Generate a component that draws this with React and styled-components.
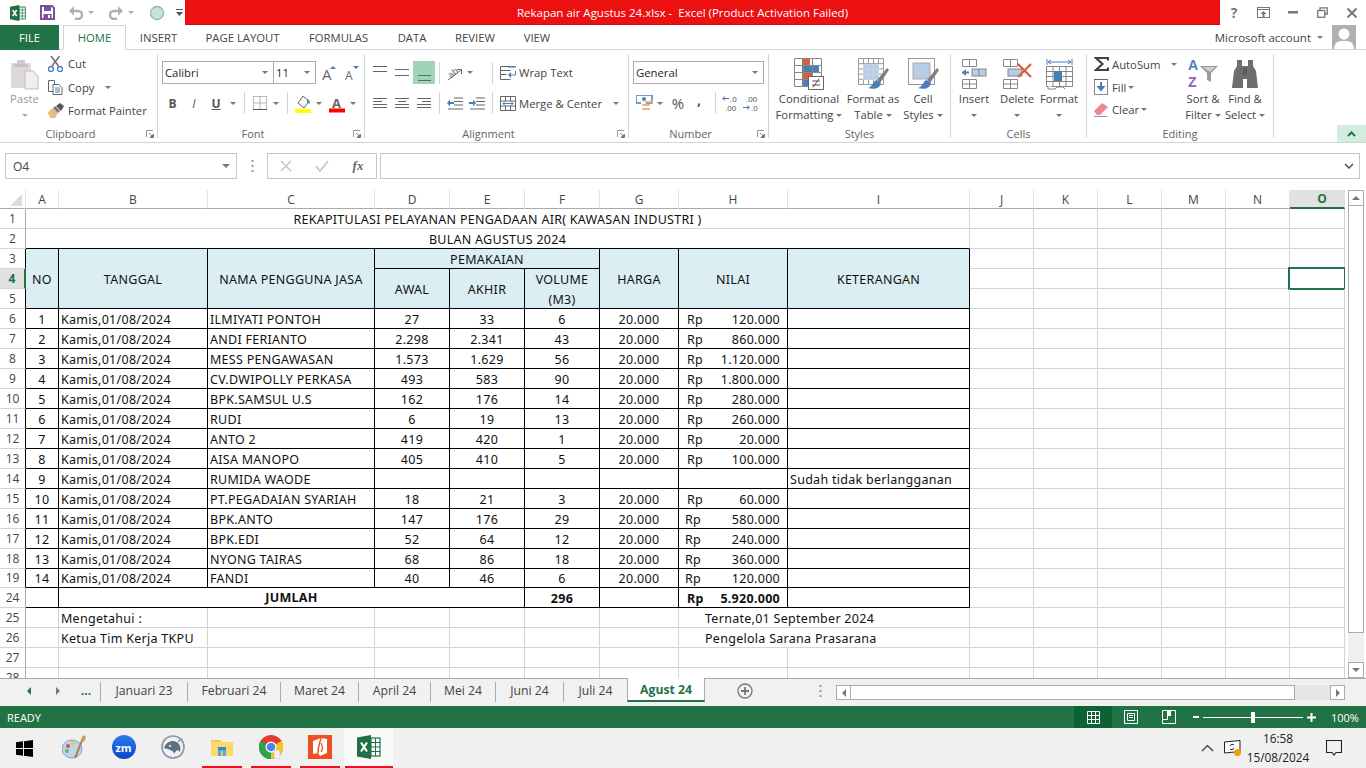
import React from 'react';
import styled, { createGlobalStyle } from 'styled-components';

const UI = '"Open Sans", "Noto Sans", sans-serif';
const CELL = '"Noto Sans", "Open Sans", sans-serif';
const ICON_TEXT = '"Liberation Sans", sans-serif';
const GREEN = '#217346';

const Global = createGlobalStyle`
  html, body { margin: 0; padding: 0; background: #fff; overflow: hidden; }
  #root { width: 1366px; height: 768px; }
  * { box-sizing: border-box; }
`;

const Screen = styled.div`
  width: 1366px; height: 768px; display: flex; flex-direction: column;
  font-family: ${UI}; font-size: 11px; color: #444; background: #fff; overflow: hidden;
`;

/* ---------- title bar ---------- */
const TitleBar = styled.div`display: flex; height: 25px; background: #fff; align-items: stretch;`;
const Qat = styled.div`width: 185px; display: flex; align-items: center; flex: none;`;
const QatItem = styled.span`
  width: ${p => p.$w}px; margin-left: ${p => p.$ml || 0}px; display: flex; justify-content: center; align-items: center;
`;
const RedTitle = styled.div`
  flex: 1; background: #ec1010; border-bottom: 1px solid #c40d0d; color: #fff; font-size: 11.5px; padding-right: 40px;
  display: flex; align-items: center; justify-content: center; white-space: pre;
`;
const WinControls = styled.div`width: 146px; display: flex; align-items: center; flex: none;`;
const HelpMark = styled.span`font-weight: 700; font-size: 14px; color: #777; width: 28px; text-align: center;`;

/* ---------- menu tabs ---------- */
const MenuRow = styled.div`display: flex; height: 25px; align-items: stretch; border-bottom: 1px solid #d4d4d4; flex: none;`;
const FileTab = styled.div`
  width: 59px; height: 25px; background: ${GREEN}; color: #fff; display: flex; align-items: center; justify-content: center;
  font-size: 11.3px; margin-right: 4px;
`;
const MenuTab = styled.div`
  width: ${p => p.$w}px; height: 25px; display: flex; align-items: center; justify-content: center; flex: none;
  font-size: 11.3px; color: ${p => (p.$active ? GREEN : '#444')};
  ${p => p.$active && `border: 1px solid #d4d4d4; border-bottom: 1px solid #fff; background:#fff;`}
`;
const Account = styled.div`
  margin-left: auto; display: flex; align-items: center; font-size: 11.5px; color: #444; padding-right: 10px; height: 24px;
`;
const Avatar = styled.div`width: 24px; height: 24px; margin-left: 8px; background: #b1b1b1; overflow: hidden; display: flex;`;

/* ---------- ribbon ---------- */
const Ribbon = styled.div`
  display: flex; height: 93px; border-bottom: 1px solid #d4d4d4; padding-top: 4px; position: relative; flex: none;
`;
const Group = styled.div`
  width: ${p => p.$w}px; height: 84px; border-right: 1px solid #d4d4d4; display: flex; flex-direction: column; position: relative; flex: none;
`;
const GroupBody = styled.div`
  height: 72px; display: flex; padding-left: ${p => p.$pl || 0}px; align-items: flex-start;
`;
const GroupLabel = styled.div`
  height: 16px; line-height: 16px; margin-bottom: -4px; text-align: center; font-size: 11px; color: #666;
  padding-right: ${p => p.$pr || 0}px;
`;
const Launcher = styled.span`position: absolute; right: 3px; bottom: 0; width: 8px; height: 8px; display: flex;`;
const Stack = styled.div`display: flex; flex-direction: column; width: ${p => (p.$w ? p.$w + 'px' : 'auto')}; flex: none;`;
const ToolRow = styled.div`display: flex; align-items: center; height: ${p => p.$h}px; margin-top: ${p => p.$mt || 0}px; flex: none;`;
const Tool = styled.span`
  width: ${p => p.$w}px; height: ${p => p.$h || 20}px; margin-left: ${p => p.$ml || 0}px; display: flex; align-items: center; justify-content: center;
  flex: none; background: ${p => (p.$active ? '#9fd5b7' : 'transparent')};
`;
const Sep = styled.span`width: 1px; height: 22px; background: #d4d4d4; margin-left: ${p => p.$ml || 0}px; flex: none;`;
const ToolText = styled.span`
  margin-left: ${p => p.$ml || 0}px; width: ${p => (p.$w ? p.$w + 'px' : 'auto')}; font-size: 11.3px; color: #444; white-space: nowrap; flex: none;
`;
const Caret = styled.i`
  display: block; width: 0; height: 0; border-left: 3px solid transparent; border-right: 3px solid transparent;
  border-top: 3px solid ${p => p.$c || '#777'};
`;
const CaretBox = styled.span`
  width: ${p => p.$w}px; margin-left: ${p => p.$ml || 0}px; display: flex; justify-content: center; align-items: center; flex: none; height: 16px;
`;
const Select = styled.div`
  width: ${p => p.$w}px; height: 23px; margin-left: ${p => p.$ml || 0}px; border: 1px solid #ababab; display: flex; align-items: center; flex: none;
  padding: 0 5px 0 2px; justify-content: space-between; font-size: 11.3px; color: #262626; background: #fff;
`;
const Paste = styled.div`
  width: 41px; margin-left: 4px; display: flex; flex-direction: column; align-items: center; color: #9a9a9a; font-size: 11.3px; flex: none;
`;
const PasteLabel = styled.span`line-height: 16px; height: 17px; margin-bottom: 6px;`;
const Big = styled.div`
  width: ${p => p.$w}px; display: flex; flex-direction: column; align-items: center; flex: none; font-size: 11.3px; color: #444;
`;
const BigIcon = styled.div`height: 32px; margin-top: 4px; margin-bottom: 1px; display: flex; align-items: center; justify-content: center;`;
const BigLine = styled.div`
  height: 16px; line-height: 16px; white-space: nowrap; display: flex; align-items: center; gap: 3px;
`;
const Collapse = styled.div`
  position: absolute; right: 0; bottom: 0; width: 29px; height: 17px; background: #d3ecdd; display: flex; align-items: center; justify-content: center;
`;
const SymbolText = styled.span`
  font-family: ${UI}; color: #555; font-size: ${p => p.$s}px; font-weight: ${p => (p.$b ? 700 : 400)};
  margin-top: ${p => p.$mt || 0}px;
`;

/* ---------- formula bar ---------- */
const FormulaBar = styled.div`height: 47px; display: flex; padding: 10px 6px 0 5px; flex: none; background: #fff;`;
const NameBox = styled.div`
  width: 232px; height: 26px; border: 1px solid #c6c6c6; display: flex; align-items: center; justify-content: space-between; padding: 0 6px 0 7px;
  font-size: 12px; color: #444; flex: none;
`;
const Dots = styled.span`width: 30px; height: 26px; display: flex; justify-content: center; align-items: center; flex: none;`;
const FxBox = styled.div`
  width: 110px; height: 26px; border: 1px solid #c6c6c6; display: flex; align-items: center; flex: none;
`;
const FxMark = styled.span`
  font-family: "Liberation Serif", serif; font-style: italic; font-weight: 700; font-size: 13px; color: #666;
`;
const FormulaInput = styled.div`
  flex: 1; margin-left: 3px; height: 26px; border: 1px solid #c6c6c6; display: flex; align-items: center; justify-content: flex-end; padding-right: 5px;
`;

/* ---------- sheet ---------- */
const SheetArea = styled.div`display: flex; height: 488px; flex: none; background: #fff;`;
const SheetClip = styled.div`width: 1345px; height: 488px; overflow: hidden; flex: none;`;
const Table = styled.table`
  table-layout: fixed; width: 1345px; border-collapse: separate; border-spacing: 0; font-family: ${CELL}; font-size: 12.5px; letter-spacing: .28px; color: #111;
`;
const Col = styled.col`width: ${p => p.$w}px;`;
const Row = styled.tr`height: ${p => p.$h || 20}px;`;
const ColHead = styled.th`
  padding: 1px 0 0 ${p => (p.$sel ? 10 : 0)}px; font-weight: ${p => (p.$sel ? 700 : 400)}; font-size: 12px; letter-spacing: 0; color: ${p => (p.$sel ? GREEN : '#444')};
  background: ${p => (p.$sel ? '#e1e1e1' : '#fff')};
  border-right: 1px solid ${p => (p.$sel ? '#e1e1e1' : '#e4e4e4')}; border-bottom: ${p => (p.$sel ? `2px solid ${GREEN}` : '1px solid #ababab')};
  font-family: ${UI}; line-height: 16px;
`;
const Corner = styled.th`
  padding: 0 0 0 9px; border-right: 1px solid #e4e4e4; border-bottom: 1px solid #ababab; background: #fff;
`;
const RowHead = styled.th`
  padding: 0; font-weight: ${p => (p.$sel ? 700 : 400)}; font-size: 12px; letter-spacing: 0; font-family: ${UI};
  color: ${p => (p.$sel ? GREEN : '#444')}; background: ${p => (p.$sel ? '#e1e1e1' : '#fff')};
  border-right: ${p => (p.$sel ? `2px solid ${GREEN}` : `1px solid ${p.$dark ? '#000' : '#ababab'}`)};
  border-bottom: 1px solid #d4d4d4; line-height: 16px;
`;
const Cell = styled.td`
  padding: ${p => (p.$raise ? '0 2px' : '2px 2px 0')}; line-height: 16px; white-space: nowrap; position: relative; vertical-align: middle;
  text-align: ${p => p.$al || 'left'};
  background: ${p => (p.$head ? '#daeef3' : 'transparent')};
  font-weight: ${p => (p.$b ? 700 : 400)};
  padding-left: ${p => p.$pl ?? 2}px;
  border-right: ${p => (p.$nr ? 'none' : `1px solid ${p.$r === 'k' ? '#000' : '#d4d4d4'}`)};
  border-bottom: ${p => (p.$nb ? 'none' : `1px solid ${p.$d === 'k' ? '#000' : '#d4d4d4'}`)};
`;
const Selection = styled.span`
  position: absolute; left: -2px; top: -2px; right: -2px; bottom: -2px; border: 2px solid ${GREEN}; pointer-events: none;
`;
const Money = styled.span`display: flex; justify-content: space-between; padding-left: ${p => p.$pl}px; padding-right: 5px; font-weight: inherit;`;

const VScroll = styled.div`
  width: 16px; margin-left: 3px; height: 488px; display: flex; flex-direction: column; background: #f0f0f0; flex: none;
`;
const ScrollBtn = styled.div`
  height: ${p => p.$h || 16}px; width: ${p => p.$w || 16}px; border: 1px solid #ababab; background: #fff; display: flex; align-items: center; justify-content: center; flex: none;
`;
const VThumb = styled.div`height: 427px; border: 1px solid #ababab; border-top: none; background: #fff; flex: none;`;
const VTrack = styled.div`flex: 1;`;

/* ---------- sheet tabs ---------- */
const TabBar = styled.div`
  height: 28px; border-top: 1px solid #ababab; background: #f1f1f1; display: flex; flex: none; padding-bottom: 4px; position: relative;
`;
const Nav = styled.div`width: 100px; display: flex; align-items: center; flex: none; height: 23px;`;
const NavItem = styled.span`
  width: ${p => p.$w}px; margin-left: ${p => p.$ml || 0}px; display: flex; justify-content: center; align-items: center; color: ${GREEN}; font-weight: 700; font-size: 12px;
`;
const TabSep = styled.span`width: 1px; height: 20px; background: #ababab; margin-top: 3px; flex: none;`;
const SheetTab = styled.div`
  width: ${p => p.$w}px; height: 23px; display: flex; align-items: center; justify-content: center; flex: none; font-size: 12.2px; color: #444;
  ${p => p.$active && `margin-top:-1px; height: 24px; background:#fff; color:${GREEN}; font-weight:700; border-left:1px solid #ababab; border-right:1px solid #ababab; border-bottom:2px solid ${GREEN};`}
`;
const AddArea = styled.div`width: 80px; display: flex; align-items: center; justify-content: center; height: 23px; flex: none;`;
const TabDots = styled.div`width: 51px; padding-left: 19px; display: flex; align-items: center; justify-content: center; height: 23px; flex: none;`;
const HScroll = styled.div`
  width: 509px; height: 15px; margin-top: 6px; display: flex; background: #e6e6e6; flex: none;
`;
const HThumb = styled.div`width: 444px; height: 15px; border: 1px solid #ababab; border-left: none; background: #fff; flex: none;`;
const HTrack = styled.div`flex: 1;`;

/* ---------- status bar ---------- */
const StatusBar = styled.div`
  height: 22px; background: ${GREEN}; color: #fff; display: flex; align-items: center; font-size: 11px; flex: none; padding-left: 7px;
`;
const ViewBtn = styled.div`
  width: ${p => p.$w}px; height: 22px; display: flex; align-items: center; justify-content: center; flex: none;
  background: ${p => (p.$active ? '#0b6234' : 'transparent')}; margin-left: ${p => p.$ml || 0}px;
`;
const ZoomTrack = styled.div`
  width: 100px; height: 1px; background: #fff; position: relative; margin: 0 3px 0 4px; flex: none;
`;
const ZoomThumb = styled.span`position: absolute; left: 48px; top: -5px; width: 4px; height: 11px; background: #fff;`;
const ZoomPct = styled.span`margin-left: 15px; color: #fff; font-size: 11px;`;

/* ---------- taskbar ---------- */
const Taskbar = styled.div`height: 40px; background: #f0f0f0; display: flex; flex: none;`;
const StartBtn = styled.div`width: 50px; display: flex; justify-content: center; padding-right: 2px; align-items: center; flex: none;`;
const TaskItem = styled.div`
  width: ${p => p.$w || 49}px; display: flex; flex-direction: column; align-items: center; flex: none;
  background: ${p => (p.$active ? '#f9f9f9' : 'transparent')};
`;
const TaskIcon = styled.div`flex: 1; display: flex; align-items: center; justify-content: center;`;
const TaskLine = styled.div`height: 2px; width: ${p => p.$w}px; background: ${p => (p.$on ? '#e81123' : 'transparent')}; flex: none;`;
const Tray = styled.div`margin-left: auto; display: flex; align-items: center; flex: none;`;
const TrayIcon = styled.span`width: 18px; margin-left: 10px; flex: none;`;
const Clock = styled.div`
  width: 72px; text-align: center; font-size: 11.8px; color: #222; line-height: 19px; display: flex; flex-direction: column;
`;
const Notice = styled.div`width: 52px; padding-right: 13px; display: flex; justify-content: center;`;

/* ---------- icons ---------- */
const Ic = ({ w, h = w, children }) => <svg width={w} height={h} viewBox={`0 0 ${w} ${h}`} style={{ display: 'block', flex: 'none' }}>{children}</svg>;

const ExcelLogo = ({ s = 16 }) => (
  <svg width={s} height={s} viewBox="0 0 24 24" style={{ display: 'block' }}>
    <rect x="9" y="3" width="14" height="18" fill="#fff" stroke="#1e7145" strokeWidth="1.2" />
    <path d="M14 3v18M18.500 3v18M9 7.500h14M9 12h14M9 16.500h14" stroke="#1e7145" strokeWidth="1" />
    <path d="M0 2.500 14 0v24L0 21.500z" fill="#1e7145" />
    <path d="M4 7.500 10 16.500M10 7.500 4 16.500" stroke="#fff" strokeWidth="2.200" />
  </svg>
);
const SaveIc = () => (
  <Ic w={15}>
    <path d="M1 1h11l2 2v11H1z" fill="#fff" stroke="#7c4fa3" strokeWidth="2" />
    <rect x="4" y="1" width="7" height="5" fill="#7c4fa3" />
    <rect x="3.500" y="9" width="8" height="5" fill="#7c4fa3" /><rect x="8" y="10" width="2" height="3" fill="#fff" />
  </Ic>
);
const UndoIc = ({ flip }) => (
  <svg width="16" height="14" viewBox="0 0 16 14" style={{ display: 'block', transform: flip ? 'scaleX(-1)' : 'none' }}>
    <path d="M2 5h8c3 0 4 2 4 4s-1.500 4-4 4H7" fill="none" stroke="#b0b0b0" strokeWidth="2.400" />
    <path d="M6 0 1 5l5 4.500z" fill="#b0b0b0" />
  </svg>
);
const QatCircle = () => (
  <Ic w={16}><circle cx="8" cy="8" r="6.500" fill="#c9e2d6" stroke="#8fb8a6" strokeWidth="1.300" /></Ic>
);
const QatMenu = () => (
  <Ic w={7} h={9}><path d="M0 1.500h7" stroke="#555" strokeWidth="1" /><path d="M0 4h7L3.500 8z" fill="#555" /></Ic>
);
const RibDisp = () => (
  <Ic w={13} h={11}><rect x=".5" y=".5" width="12" height="10" fill="none" stroke="#777" /><path d="M0 2.500h13" stroke="#777" /><path d="M3.500 7 6.500 4l3 3H7.500v3h-2V7z" fill="#777" /></Ic>
);
const MinIc = () => <Ic w={10} h={3}><rect width="10" height="2.500" fill="#777" /></Ic>;
const RestoreIc = () => (
  <Ic w={11}><path d="M3 3V.8h7.200V7H8" fill="none" stroke="#777" strokeWidth="1.300" /><rect x=".7" y="3.500" width="7" height="6.800" fill="none" stroke="#777" strokeWidth="1.300" /></Ic>
);
const CloseIc = () => <Ic w={10}><path d="M.5.500l9 9M9.500.5l-9 9" stroke="#777" strokeWidth="2" /></Ic>;
const AvatarIc = () => (
  <svg width="24" height="24" viewBox="0 0 24 24"><circle cx="12" cy="9" r="5.500" fill="#fff" /><path d="M2 24c0-6 4-8 7-8h6c3 0 7 2 7 8z" fill="#fff" /></svg>
);

const PasteIc = () => (
  <Ic w={29} h={31}>
    <rect x="1" y="4" width="20" height="25" rx="1" fill="#dcd8dc" />
    <rect x="7" y="1" width="8" height="6" rx="1" fill="#cfc9cf" /><rect x="4" y="5" width="14" height="3" fill="#c6c0c6" />
    <path d="M15 12h8l5 5v13H15z" fill="#f1eef1" stroke="#bdbdbd" />
  </Ic>
);
const CutIc = () => (
  <Ic w={15} h={16}>
    <path d="M3 0 10.500 10M11.500 0 4 10" stroke="#6e6e6e" strokeWidth="1.500" fill="none" />
    <circle cx="3" cy="13" r="2.500" fill="none" stroke="#4a7ebb" strokeWidth="1.300" /><circle cx="12" cy="13" r="2.500" fill="none" stroke="#4a7ebb" strokeWidth="1.300" />
  </Ic>
);
const CopyIc = () => (
  <Ic w={15}>
    <path d="M.5.500h6v11h-6z" fill="#fff" stroke="#666" />
    <path d="M5 4.500h6l3 3v7H5z" fill="#fff" stroke="#666" /><path d="M7 8h5M7 10h5M7 12h5" stroke="#4a7ebb" />
  </Ic>
);
const PainterIc = () => (
  <Ic w={17} h={15}>
    <path d="M.5 9.500 6 5l5 5-3 5H3.500z" fill="#e6bc85" /><path d="M6 5l2-2 5 5-2 2z" fill="#777" /><path d="M9 3l4-3 4 3-3 5z" fill="#555" />
  </Ic>
);
const Launch = () => (
  <Ic w={8}><path d="M.5 7V.5H7" fill="none" stroke="#999" /><path d="M3 3l4 4M7.500 4v3.500H4z" stroke="#777" fill="#777" /></Ic>
);
const Lines = ({ rows, w = 15 }) => (
  <Ic w={w} h={20}>{rows.map(([a, b, y], i) => <path key={i} d={`M${a} ${y + .5}H${b}`} stroke="#666" />)}</Ic>
);
const GrowA = ({ down }) => (
  <Ic w={14} h={20}>
    <text x="0" y="17" fontFamily={UI} fontSize={down ? 12 : 15} fill="#666">A</text>
    <path d={down ? 'M8 3h6l-3 3z' : 'M8 6h6l-3-3z'} fill="#4a7ebb" />
  </Ic>
);
const BoldT = styled.span`
  font-family: ${UI}; font-size: 12px; color: #555; font-weight: ${p => (p.$b ? 700 : 400)}; font-style: ${p => (p.$i ? 'italic' : 'normal')};
  text-decoration: ${p => (p.$u ? 'underline' : 'none')};
`;
const BorderIc = () => (
  <Ic w={14}>
    <path d="M.5.500h13v13H.5zM7 .5v13M.5 7h13" fill="none" stroke="#777" strokeDasharray="1 1" /><path d="M0 13.500h14" stroke="#555" />
  </Ic>
);
const FillIc = () => (
  <Ic w={16} h={19}>
    <path d="M3 9 8 2l6 5-5 7z" fill="#fff" stroke="#666" /><path d="M12 5c3 1 3 4 2.500 5L12 8z" fill="#4a7ebb" />
    <rect y="15" width="16" height="4" fill="#ffff00" />
  </Ic>
);
const FontColorIc = () => (
  <Ic w={16} h={20}>
    <text x="3" y="15" fontFamily={UI} fontWeight="700" fontSize="13" fill="#666">A</text>
    <rect y="15.500" width="16" height="4" fill="#ff0000" />
  </Ic>
);
const OrientIc = () => (
  <svg width="22" height="22" viewBox="0 0 22 22" style={{ display: 'block', flex: 'none', margin: '-1px -2px' }}>
    <text x="4" y="14" fontFamily={ICON_TEXT} fontSize="9" fill="#666" transform="rotate(-40 9 11)">ab</text>
    <path d="M4 18 17 8" stroke="#666" /><path d="M13 7.500h4.500V12" fill="none" stroke="#666" />
  </svg>
);
const IndentIc = ({ right }) => (
  <Ic w={16} h={13}>
    <path d="M7 1h9M7 4.500h9M7 8h9M1 12h15" stroke="#666" fill="none" />
    {right ? <path d="M0 5h4V2.500L7 6 4 9.500V7H0z" fill="#4a7ebb" /> : <path d="M7 5H3V2.500L0 6l3 3.500V7h4z" fill="#4a7ebb" />}
  </Ic>
);
const WrapIc = () => (
  <Ic w={16} h={14}>
    <path d="M.5.500h15M.5 4.500h10M.5 8.500h6M.5 13.500h10M.5.500v13" stroke="#666" fill="none" />
    <path d="M8 1h8" stroke="#4a7ebb" /><path d="M15.500 5v4H9" stroke="#4a7ebb" fill="none" /><path d="M11 6 8 9l3 3z" fill="#4a7ebb" />
  </Ic>
);
const MergeIc = () => (
  <Ic w={16} h={15}>
    <path d="M.5.500h15v14H.5zM.5 5h15M.5 10h15M5.500.5V5M10.500.5V5M5.500 10v4.500M10.500 10v4.500" fill="none" stroke="#666" />
    <path d="M3 7.500h10" stroke="#4a7ebb" /><path d="M5 5.500 3 7.500l2 2M11 5.500l2 2-2 2" fill="none" stroke="#4a7ebb" />
  </Ic>
);
const CurrencyIc = () => (
  <Ic w={17}>
    <path d="M0 0h16v8h-6" fill="none" stroke="#4a7ebb" strokeWidth="1.500" /><path d="M0 0v8h5" fill="none" stroke="#4a7ebb" strokeWidth="1.500" />
    <circle cx="8" cy="4" r="2" fill="#4a7ebb" />
    <rect x="6" y="9" width="8" height="2" rx="1" fill="#eab676" /><rect x="9" y="6" width="8" height="2" rx="1" fill="#eab676" /><rect x="6" y="13" width="8" height="2" rx="1" fill="#eab676" />
  </Ic>
);
const DecIc = ({ more }) => (
  <Ic w={17} h={20}>
    <text fontFamily={ICON_TEXT} fontSize="8" fill="#555" x={more ? 3 : 8} y="8.500">{more ? '.00' : '.0'}</text>
    <text fontFamily={ICON_TEXT} fontSize="8" fill="#555" x={more ? 8 : 3} y="18">{more ? '.0' : '.00'}</text>
    {more
      ? <path d="M0 14.500h6M4 12.500l2.500 2-2.500 2" stroke="#4a7ebb" fill="none" />
      : <path d="M1 5.500h6M3 3.500.5 5.500 3 7.500" stroke="#4a7ebb" fill="none" />}
  </Ic>
);
const gridCells = (x, y, w, h, nx, ny, color = '#888') => {
  let d = `M${x + .5} ${y + .5}h${w}v${h}h-${w}z`;
  for (let i = 1; i < nx; i++) d += `M${x + .5 + (w * i) / nx} ${y + .5}v${h}`;
  for (let i = 1; i < ny; i++) d += `M${x + .5} ${y + .5 + (h * i) / ny}h${w}`;
  return <path d={d} fill="none" stroke={color} />;
};
const CondIc = () => (
  <Ic w={30} h={32}>
    <rect x="8" y="1" width="8" height="6" fill="#d7603c" /><rect x="8" y="8" width="17" height="7" fill="#4a7ebb" />
    <rect x="8" y="15" width="10" height="7" fill="#d7603c" /><rect x="8" y="22" width="6" height="6" fill="#4a7ebb" />
    {gridCells(0, 0, 27, 28, 3, 4)}
    <rect x="14.500" y="18.500" width="15" height="13" fill="#fff" stroke="#666" />
    <path d="M18 23h8M18 27h8M25 20.500 19 29.500" stroke="#555" fill="none" />
  </Ic>
);
const Brush = ({ x = 0 }) => (
  <g transform={`translate(${x} 0)`}>
    <path d="M29 10 19 22l3 3 9-13z" fill="#7e7e7e" />
    <path d="M18 22c-3 2-3 6-8 8 7 2 12 0 13-5z" fill="#4a7ebb" />
  </g>
);
const TableIc = () => (
  <Ic w={31} h={32}>
    {gridCells(0, 0, 25, 26, 5, 5, '#999')}
    <rect x="5" y="6" width="16" height="16" fill="#b8cce4" />
    {gridCells(5, 6, 15, 15, 3, 3, '#c9d6e6')}
    <Brush />
  </Ic>
);
const StylesIc = () => (
  <Ic w={31} h={32}>
    <rect x=".5" y=".5" width="26" height="26" fill="none" stroke="#999" />
    <rect x="5" y="5" width="17" height="16" fill="#b8cce4" stroke="#aaa" />
    <Brush />
  </Ic>
);
const InsertIc = () => (
  <Ic w={27} h={30}>
    {gridCells(1, 0, 14, 7, 2, 1)}
    {gridCells(1, 20, 14, 9, 2, 2)}
    <rect x="11" y="10" width="14" height="7" fill="#b8cce4" stroke="#888" /><path d="M18 10v7" stroke="#888" />
    <path d="M1 13.500h7" stroke="#4a7ebb" strokeWidth="2" /><path d="M5 10 1 13.500 5 17z" fill="#4a7ebb" />
  </Ic>
);
const DeleteIc = () => (
  <Ic w={30} h={30}>
    {gridCells(1, 0, 14, 7, 2, 1)}
    {gridCells(1, 20, 14, 9, 2, 2)}
    <rect x="6" y="10" width="14" height="7" fill="#b8cce4" stroke="#888" />
    <path d="M16 5 29 18M29 5 16 18" stroke="#d7603c" strokeWidth="2.200" />
  </Ic>
);
const FormatIc = () => (
  <Ic w={27} h={32}>
    <path d="M1 1v6M26 1v6M3 4h21" stroke="#4a7ebb" /><path d="M5 2 2 4l3 2M22 2l3 2-3 2" fill="none" stroke="#4a7ebb" />
    {gridCells(0, 8, 26, 20, 4, 4)}
    <rect x="8" y="13" width="8" height="10" fill="#4a7ebb" />
    <path d="M2 28v3h7l2-2h6l2 2" fill="#fff" stroke="#888" />
  </Ic>
);
const SigmaIc = () => <Ic w={15}><path d="M14 3.500V1H2l6.500 6L2 13h12v-2.500" fill="none" stroke="#444" strokeWidth="2.200" /></Ic>;
const FillDownIc = () => (
  <Ic w={14} h={16}><rect x=".5" y=".5" width="13" height="15" fill="#fff" stroke="#888" /><path d="M0 .5h14" stroke="#666" /><path d="M7 3v6" stroke="#4a7ebb" strokeWidth="2" /><path d="M2.500 7h9L7 12.500z" fill="#4a7ebb" /></Ic>
);
const EraserIc = () => (
  <Ic w={15} h={14}><path d="M0 8 8 0l6 4-8 8H3z" fill="#ec8a94" /><path d="M0 13.500h13" stroke="#999" /></Ic>
);
const SortIc = () => (
  <svg width="30" height="34" viewBox="0 0 30 34" style={{ display: 'block', flex: 'none' }}>
    <text x="0" y="13" fontFamily={ICON_TEXT} fontWeight="700" fontSize="14" fill="#4a7ebb">A</text>
    <text x="0" y="30" fontFamily={ICON_TEXT} fontWeight="700" fontSize="14" fill="#8f5fc0">Z</text>
    <path d="M12 9h18l-7 7v9l-4-2v-7z" fill="#9a9a9a" /><path d="M15 10h12l-5 5z" fill="#d0d0d0" />
  </svg>
);
const BinocIc = () => (
  <Ic w={26} h={28}>
    <path d="M5 0h5v6h6V0h5v6l3 5 2 17H15v-9h-4v9H0l2-17 3-5z" fill="#6e6e6e" /><rect x="11" y="8" width="4" height="7" fill="#5c5c5c" />
  </Ic>
);
const UpChev = ({ c = GREEN }) => <Ic w={9} h={6}><path d="M1 5l3.500-3.500L8 5" fill="none" stroke={c} strokeWidth="2" /></Ic>;
const DownChev = () => <Ic w={10} h={6}><path d="M1 1l4 4 4-4" fill="none" stroke="#555" strokeWidth="1.500" /></Ic>;
const ThreeDots = ({ c = '#999' }) => (
  <Ic w={3} h={12}><rect x=".5" width="2" height="2" fill={c} /><rect x=".5" y="5" width="2" height="2" fill={c} /><rect x=".5" y="10" width="2" height="2" fill={c} /></Ic>
);
const Tri = ({ d }) => {
  const p = { up: 'M0 4h8L4 0z', down: 'M0 0h8L4 4z', left: 'M4 0v8L0 4z', right: 'M0 0v8l4-4z' }[d];
  return <Ic w={d === 'up' || d === 'down' ? 8 : 4} h={d === 'up' || d === 'down' ? 4 : 8}><path d={p} fill="#777" /></Ic>;
};
const PlusCircle = () => (
  <Ic w={16}><circle cx="8" cy="8" r="7" fill="none" stroke="#777" strokeWidth="1.300" /><path d="M4 8h8M8 4v8" stroke="#777" strokeWidth="1.800" /></Ic>
);
const NormalView = () => <Ic w={13}><path d="M.5.500h12v12H.5zM4.500.5v12M8.500.5v12M.5 4.500h12M.5 8.500h12" fill="none" stroke="#fff" /></Ic>;
const PageView = () => <Ic w={14}><path d="M.5.500h13v13H.5z" fill="none" stroke="#fff" /><path d="M3.500 3.500h7v7h-7zM5 5.500h4M5 7.500h4" fill="none" stroke="#fff" /></Ic>;
const BreakView = () => <Ic w={14}><path d="M.5.500h13v13H.5zM5.500 9.500H.5M5.500.5v9" fill="none" stroke="#fff" /><rect x="5" width="4" height="6" fill="#fff" /></Ic>;
const WinLogo = () => (
  <Ic w={17}><path d="M0 2.300 7 1.300V8H0zM8 1.200 17 0v8H8zM0 9h7v6.700l-7-1zM8 9h9v8l-9-1.200z" fill="#000" /></Ic>
);
const PaintIc = () => (
  <Ic w={25}>
    <ellipse cx="10" cy="14" rx="10" ry="9" fill="#bcd6ea" stroke="#7da3c4" />
    <circle cx="6" cy="11" r="2" fill="#d0584a" /><circle cx="11" cy="8" r="2" fill="#e8c84a" /><circle cx="5" cy="16" r="2" fill="#6fb36a" />
    <path d="M13 23 21 3" stroke="#b8793a" strokeWidth="2" /><path d="M19 5l2-5 3 2-2 5z" fill="#c99a66" />
  </Ic>
);
const ZoomApp = styled.div`
  width: 24px; height: 24px; border-radius: 12px; background: linear-gradient(#2a7cf0, #0a45c8); color: #fff; font-weight: 700; font-size: 11px;
  display: flex; align-items: center; justify-content: center; font-family: ${UI};
`;
const FishIc = () => (
  <Ic w={24}>
    <circle cx="12" cy="12" r="11" fill="#eef1f4" stroke="#8d9aa8" strokeWidth="1.700" />
    <path d="M3 13c2-7 10-9 14-5 2 2 3 5 2 9-2-3-4-2-6 2 0-3-3-4-10-6z" fill="#5d6f82" /><path d="M21 3 17 7" stroke="#8d9aa8" strokeWidth="1.500" />
    <circle cx="9" cy="11" r="1" fill="#fff" />
  </Ic>
);
const FolderIc = () => (
  <Ic w={22} h={18}>
    <path d="M0 2h9l2 2h11v14H0z" fill="#f0c75e" /><path d="M0 4h22v14H0z" fill="#ffd966" />
    <rect x="7" y="9" width="8" height="3" fill="#2f8fd8" /><rect x="7" y="12" width="8" height="6" fill="#58a9e6" /><rect x="10" y="13" width="2" height="5" fill="#f0c75e" />
  </Ic>
);
const ChromeIc = () => (
  <Ic w={24}>
    <circle cx="12" cy="12" r="12" fill="#e33b2e" />
    <path d="M12 12 22.400 6A12 12 0 0 1 12 24z" fill="#f7c518" />
    <path d="M12 12 12 24A12 12 0 0 1 1.600 6z" fill="#2ba24c" />
    <circle cx="12" cy="12" r="5.500" fill="#fff" /><circle cx="12" cy="12" r="4.300" fill="#4a86e8" />
    <rect x="15" y="15" width="6" height="9" rx="2" fill="#f2f2f2" stroke="#bbb" strokeWidth=".5" />
  </Ic>
);
const PdfIc = () => (
  <Ic w={24}>
    <rect width="24" height="24" fill="#f04e23" />
    <path d="M5 6 13 3l6 1v14l-7 3-2-3-5 1z" fill="#fff" />
    <path d="M13 3c-1 5-3 8-3 15" stroke="#f04e23" strokeWidth="1.500" fill="none" />
    <path d="M13 8c2 3 2 6 0 9" stroke="#f04e23" strokeWidth="1.200" fill="none" />
  </Ic>
);
const ChevTray = () => <Ic w={13} h={8}><path d="M1 7l5.500-5.500L12 7" fill="none" stroke="#333" strokeWidth="1.200" /></Ic>;
const TrayDisp = () => (
  <Ic w={18} h={16}>
    <path d="M.5 2 16 .5v11L.5 13z" fill="#fff" stroke="#222" /><path d="M6 6c1-2 3-2 4-1M10 8c-1 2-3 2-4 1" fill="none" stroke="#222" />
    <circle cx="13.500" cy="12.500" r="3.500" fill="#f39a0d" />
  </Ic>
);
const NoteIc = () => <Ic w={16} h={16}><path d="M.5.500h15v12H10L8 15l-2-2.500H.5z" fill="none" stroke="#222" strokeWidth="1.100" /></Ic>;

/* ---------- data ---------- */
const COLS = ['A', 'B', 'C', 'D', 'E', 'F', 'G', 'H', 'I', 'J', 'K', 'L', 'M', 'N', 'O'];
const WIDTHS = [33, 149, 167, 75, 75, 75, 79, 109, 182, 64, 64, 64, 64, 64, 55];
const DATE = 'Kamis,01/08/2024';
const DATA = [
  [6, 1, 'ILMIYATI PONTOH', '27', '33', '6', '120.000'],
  [7, 2, 'ANDI FERIANTO', '2.298', '2.341', '43', '860.000'],
  [8, 3, 'MESS PENGAWASAN', '1.573', '1.629', '56', '1.120.000'],
  [9, 4, 'CV.DWIPOLLY PERKASA', '493', '583', '90', '1.800.000'],
  [10, 5, 'BPK.SAMSUL U.S', '162', '176', '14', '280.000'],
  [11, 6, 'RUDI', '6', '19', '13', '260.000'],
  [12, 7, 'ANTO 2', '419', '420', '1', '20.000'],
  [13, 8, 'AISA MANOPO', '405', '410', '5', '100.000'],
  [14, 9, 'RUMIDA WAODE', '', '', '', null, 'Sudah tidak berlangganan'],
  [15, 10, 'PT.PEGADAIAN SYARIAH', '18', '21', '3', '60.000'],
  [16, 11, 'BPK.ANTO', '147', '176', '29', '580.000'],
  [17, 12, 'BPK.EDI', '52', '64', '12', '240.000'],
  [18, 13, 'NYONG TAIRAS', '68', '86', '18', '360.000'],
  [19, 14, 'FANDI', '40', '46', '6', '120.000'],
];
const Blanks = ({ sel }) => ['J', 'K', 'L', 'M', 'N', 'O'].map(c => (
  <Cell key={c}>{sel && c === 'O' && <Selection />}</Cell>
));

const BigBtn = ({ w, icon, l1, l2, caretOnly }) => (
  <Big $w={w}>
    <BigIcon>{icon}</BigIcon>
    <BigLine>{l1}</BigLine>
    <BigLine>{l2}{(l2 || caretOnly) && <Caret />}</BigLine>
  </Big>
);

const MENU = [
  ['INSERT', 65], ['PAGE LAYOUT', 103], ['FORMULAS', 89], ['DATA', 58], ['REVIEW', 68], ['VIEW', 56],
];
const TABS = [['Januari 23', 86], ['Februari 24', 92], ['Maret 24', 77], ['April 24', 71], ['Mei 24', 64], ['Juni 24', 67]];

export default function App() {
  return (
    <Screen>
      <Global />
      <TitleBar>
        <Qat>
          <QatItem $w={16} $ml={10}><ExcelLogo /></QatItem>
          <QatItem $w={15} $ml={14}><SaveIc /></QatItem>
          <QatItem $w={16} $ml={13}><UndoIc /></QatItem>
          <QatItem $w={8} $ml={3}><Caret $c="#aaa" /></QatItem>
          <QatItem $w={16} $ml={13}><UndoIc flip /></QatItem>
          <QatItem $w={8} $ml={3}><Caret $c="#aaa" /></QatItem>
          <QatItem $w={16} $ml={14}><QatCircle /></QatItem>
          <QatItem $w={7} $ml={11}><QatMenu /></QatItem>
        </Qat>
        <RedTitle>Rekapan air Agustus 24.xlsx -  Excel (Product Activation Failed)</RedTitle>
        <WinControls>
          <HelpMark>?</HelpMark>
          <QatItem $w={13} $ml={9}><RibDisp /></QatItem>
          <QatItem $w={10} $ml={18}><MinIc /></QatItem>
          <QatItem $w={11} $ml={19}><RestoreIc /></QatItem>
          <QatItem $w={10} $ml={19}><CloseIc /></QatItem>
        </WinControls>
      </TitleBar>

      <MenuRow>
        <FileTab>FILE</FileTab>
        <MenuTab $w={63} $active>HOME</MenuTab>
        {MENU.map(([t, w]) => <MenuTab key={t} $w={w}>{t}</MenuTab>)}
        <Account>
          Microsoft account
          <CaretBox $w={8} $ml={5}><Caret /></CaretBox>
          <Avatar><AvatarIc /></Avatar>
        </Account>
      </MenuRow>

      <Ribbon>
        <Group $w={158}>
          <GroupBody>
            <Paste>
              <BigIcon><PasteIc /></BigIcon>
              <PasteLabel>Paste</PasteLabel>
              <Caret $c="#aaa" />
            </Paste>
            <Stack $w={105}>
              <ToolRow $h={19}><Tool $w={19} $ml={1}><CutIc /></Tool><ToolText $ml={3}>Cut</ToolText></ToolRow>
              <ToolRow $h={28}><Tool $w={19} $ml={1}><CopyIc /></Tool><ToolText $ml={3} $w={36}>Copy</ToolText><CaretBox $w={8}><Caret /></CaretBox></ToolRow>
              <ToolRow $h={18}><Tool $w={19} $ml={1}><PainterIc /></Tool><ToolText $ml={3}>Format Painter</ToolText></ToolRow>
            </Stack>
          </GroupBody>
          <GroupLabel $pr={16}>Clipboard</GroupLabel>
          <Launcher><Launch /></Launcher>
        </Group>

        <Group $w={207}>
          <GroupBody $pl={4}>
            <Stack>
              <ToolRow $h={23} $mt={7}>
                <Select $w={112}>Calibri<Caret /></Select>
                <Select $w={43} $ml={-1}>11<Caret /></Select>
                <Tool $w={14} $ml={6}><GrowA /></Tool>
                <Tool $w={14} $ml={9}><GrowA down /></Tool>
              </ToolRow>
              <ToolRow $h={22} $mt={8}>
                <Tool $w={21}><BoldT $b>B</BoldT></Tool>
                <Tool $w={22}><BoldT $i>I</BoldT></Tool>
                <Tool $w={22}><BoldT $u $b>U</BoldT></Tool>
                <CaretBox $w={12}><Caret /></CaretBox>
                <Sep $ml={5} />
                <Tool $w={25} $ml={2}><BorderIc /></Tool>
                <CaretBox $w={8}><Caret /></CaretBox>
                <Sep $ml={7} />
                <Tool $w={24} $ml={3}><FillIc /></Tool>
                <CaretBox $w={8}><Caret /></CaretBox>
                <Tool $w={24} $ml={2}><FontColorIc /></Tool>
                <CaretBox $w={8}><Caret /></CaretBox>
              </ToolRow>
            </Stack>
          </GroupBody>
          <GroupLabel $pr={16}>Font</GroupLabel>
          <Launcher><Launch /></Launcher>
        </Group>

        <Group $w={264}>
          <GroupBody $pl={4}>
            <Stack>
              <ToolRow $h={23} $mt={7}>
                <Tool $w={22} $h={23}><Lines rows={[[0, 14, 3], [0, 14, 8]]} /></Tool>
                <Tool $w={22} $h={23}><Lines rows={[[0, 14, 6], [0, 14, 12]]} /></Tool>
                <Tool $w={22} $h={23} $active><Lines rows={[[1, 14, 12], [1, 14, 17]]} /></Tool>
                <Sep $ml={4} />
                <Tool $w={24} $ml={3}><OrientIc /></Tool>
                <CaretBox $w={6}><Caret /></CaretBox>
                <Sep $ml={19} />
                <Tool $w={16} $ml={7}><WrapIc /></Tool>
                <ToolText $ml={3}>Wrap Text</ToolText>
              </ToolRow>
              <ToolRow $h={22} $mt={8}>
                <Tool $w={22}><Lines rows={[[0, 14, 5], [0, 9, 8], [0, 14, 11], [0, 14, 14]]} /></Tool>
                <Tool $w={22}><Lines rows={[[0, 14, 5], [3, 11, 8], [0, 14, 11], [0, 14, 14]]} /></Tool>
                <Tool $w={22}><Lines rows={[[0, 14, 5], [5, 14, 8], [0, 14, 11], [0, 14, 14]]} /></Tool>
                <Sep $ml={4} />
                <Tool $w={22} $ml={4}><IndentIc /></Tool>
                <Tool $w={22}><IndentIc right /></Tool>
                <Sep $ml={4} />
                <Tool $w={16} $ml={7}><MergeIc /></Tool>
                <ToolText $ml={3} $w={89}>Merge &amp; Center</ToolText>
                <CaretBox $w={16}><Caret /></CaretBox>
              </ToolRow>
            </Stack>
          </GroupBody>
          <GroupLabel $pr={16}>Alignment</GroupLabel>
          <Launcher><Launch /></Launcher>
        </Group>

        <Group $w={140}>
          <GroupBody $pl={4}>
            <Stack>
              <ToolRow $h={23} $mt={7}>
                <Select $w={131}>General<Caret /></Select>
              </ToolRow>
              <ToolRow $h={22} $mt={8}>
                <Tool $w={22}><CurrencyIc /></Tool>
                <CaretBox $w={10}><Caret /></CaretBox>
                <Tool $w={26}><SymbolText $s={15}>%</SymbolText></Tool>
                <Tool $w={16}><SymbolText $s={14} $b $mt={-8}>,</SymbolText></Tool>
                <Sep $ml={8} />
                <Tool $w={21} $ml={4}><DecIc /></Tool>
                <Tool $w={21}><DecIc more /></Tool>
              </ToolRow>
            </Stack>
          </GroupBody>
          <GroupLabel $pr={16}>Number</GroupLabel>
          <Launcher><Launch /></Launcher>
        </Group>

        <Group $w={182}>
          <GroupBody $pl={4}>
            <BigBtn w={72} icon={<CondIc />} l1="Conditional" l2="Formatting" />
            <BigBtn w={56} icon={<TableIc />} l1="Format as" l2="Table" />
            <BigBtn w={44} icon={<StylesIc />} l1="Cell" l2="Styles" />
          </GroupBody>
          <GroupLabel>Styles</GroupLabel>
        </Group>

        <Group $w={136}>
          <GroupBody>
            <BigBtn w={46} icon={<InsertIc />} l1="Insert" caretOnly />
            <BigBtn w={40} icon={<DeleteIc />} l1="Delete" caretOnly />
            <BigBtn w={44} icon={<FormatIc />} l1="Format" caretOnly />
          </GroupBody>
          <GroupLabel>Cells</GroupLabel>
        </Group>

        <Group $w={187}>
          <GroupBody $pl={6}>
            <Stack $w={90}>
              <ToolRow $h={21}><Tool $w={16}><SigmaIc /></Tool><ToolText $ml={3} $w={58}>AutoSum</ToolText><CaretBox $w={8}><Caret /></CaretBox></ToolRow>
              <ToolRow $h={24}><Tool $w={16}><FillDownIc /></Tool><ToolText $ml={3}>Fill</ToolText><CaretBox $w={8} $ml={1}><Caret /></CaretBox></ToolRow>
              <ToolRow $h={21}><Tool $w={16}><EraserIc /></Tool><ToolText $ml={3}>Clear</ToolText><CaretBox $w={8} $ml={1}><Caret /></CaretBox></ToolRow>
            </Stack>
            <BigBtn w={40} icon={<SortIc />} l1="Sort &" l2="Filter" />
            <BigBtn w={44} icon={<BinocIc />} l1="Find &" l2="Select" />
          </GroupBody>
          <GroupLabel>Editing</GroupLabel>
        </Group>
        <Collapse><UpChev /></Collapse>
      </Ribbon>

      <FormulaBar>
        <NameBox>O4<Tri d="down" /></NameBox>
        <Dots><ThreeDots /></Dots>
        <FxBox>
          <Tool $w={36}><Ic w={12} h={12}><path d="M1 1l10 10M11 1 1 11" stroke="#c6c6c6" strokeWidth="1.500" /></Ic></Tool>
          <Tool $w={36}><Ic w={14} h={12}><path d="M1 6l4 5 8-10" fill="none" stroke="#c6c6c6" strokeWidth="1.800" /></Ic></Tool>
          <Tool $w={36}><FxMark>fx</FxMark></Tool>
        </FxBox>
        <FormulaInput><DownChev /></FormulaInput>
      </FormulaBar>

      <SheetArea>
        <SheetClip>
          <Table>
            <colgroup>
              <Col $w={26} />
              {WIDTHS.map((w, i) => <Col key={i} $w={w} />)}
            </colgroup>
            <tbody>
              <Row $h={19}>
                <Corner><Ic w={13} h={13}><path d="M13 1v12H1z" fill="#dcdcdc" /></Ic></Corner>
                {COLS.map(c => <ColHead key={c} $sel={c === 'O'}>{c}</ColHead>)}
              </Row>
              <Row>
                <RowHead>1</RowHead>
                <Cell colSpan={9} $al="center">REKAPITULASI PELAYANAN PENGADAAN AIR( KAWASAN INDUSTRI )</Cell>
                <Blanks />
              </Row>
              <Row>
                <RowHead>2</RowHead>
                <Cell colSpan={9} $al="center" $d="k">BULAN AGUSTUS 2024</Cell>
                <Blanks />
              </Row>
              <Row>
                <RowHead $dark>3</RowHead>
                <Cell rowSpan={3} $head $al="center" $r="k" $d="k">NO</Cell>
                <Cell rowSpan={3} $head $al="center" $r="k" $d="k">TANGGAL</Cell>
                <Cell rowSpan={3} $head $al="center" $r="k" $d="k">NAMA PENGGUNA JASA</Cell>
                <Cell colSpan={3} $head $al="center" $r="k" $d="k">PEMAKAIAN</Cell>
                <Cell rowSpan={3} $head $al="center" $r="k" $d="k">HARGA</Cell>
                <Cell rowSpan={3} $head $al="center" $r="k" $d="k">NILAI</Cell>
                <Cell rowSpan={3} $head $al="center" $r="k" $d="k">KETERANGAN</Cell>
                <Blanks />
              </Row>
              <Row>
                <RowHead $sel>4</RowHead>
                <Cell rowSpan={2} $head $al="center" $r="k" $d="k">AWAL</Cell>
                <Cell rowSpan={2} $head $al="center" $r="k" $d="k">AKHIR</Cell>
                <Cell $head $al="center" $r="k" $nb>VOLUME</Cell>
                <Blanks sel />
              </Row>
              <Row>
                <RowHead $dark>5</RowHead>
                <Cell $head $al="center" $r="k" $d="k">(M3)</Cell>
                <Blanks />
              </Row>
              {DATA.map(([rowNo, no, name, awal, akhir, vol, nilai, note]) => (
                <Row key={rowNo} $h={rowNo === 19 ? 19 : 20}>
                  <RowHead $dark>{rowNo}</RowHead>
                  <Cell $al="center" $r="k" $d="k">{no}</Cell>
                  <Cell $r="k" $d="k">{DATE}</Cell>
                  <Cell $r="k" $d="k">{name}</Cell>
                  <Cell $al="center" $r="k" $d="k">{awal}</Cell>
                  <Cell $al="center" $r="k" $d="k">{akhir}</Cell>
                  <Cell $al="center" $r="k" $d="k">{vol}</Cell>
                  <Cell $al="center" $r="k" $d="k">{nilai ? '20.000' : ''}</Cell>
                  <Cell $r="k" $d="k">{nilai && <Money $pl={rowNo >= 16 ? 4 : 6}><span>Rp</span><span>{nilai}</span></Money>}</Cell>
                  <Cell $r="k" $d="k">{note}</Cell>
                  <Blanks />
                </Row>
              ))}
              <Row>
                <RowHead>24</RowHead>
                <Cell $r="k" $d="k" />
                <Cell colSpan={4} $al="center" $b $r="k" $d="k" $raise>JUMLAH</Cell>
                <Cell $al="center" $b $r="k" $d="k">296</Cell>
                <Cell $r="k" $d="k" />
                <Cell $r="k" $d="k" $b><Money $pl={6}><span>Rp</span><span>5.920.000</span></Money></Cell>
                <Cell $r="k" $d="k" />
                <Blanks />
              </Row>
              <Row>
                <RowHead>25</RowHead>
                <Cell />
                <Cell>Mengetahui :</Cell>
                <Cell /><Cell /><Cell /><Cell /><Cell />
                <Cell $pl={26} $nr>Ternate,01 September 2024</Cell>
                <Cell />
                <Blanks />
              </Row>
              <Row>
                <RowHead>26</RowHead>
                <Cell />
                <Cell>Ketua Tim Kerja TKPU</Cell>
                <Cell /><Cell /><Cell /><Cell /><Cell />
                <Cell $pl={26} $nr>Pengelola Sarana Prasarana</Cell>
                <Cell />
                <Blanks />
              </Row>
              {[27, 28].map(n => (
                <Row key={n}>
                  <RowHead>{n}</RowHead>
                  <Cell /><Cell /><Cell /><Cell /><Cell /><Cell /><Cell /><Cell /><Cell />
                  <Blanks />
                </Row>
              ))}
            </tbody>
          </Table>
        </SheetClip>
        <VScroll>
          <ScrollBtn><Tri d="up" /></ScrollBtn>
          <VThumb />
          <VTrack />
          <ScrollBtn><Tri d="down" /></ScrollBtn>
        </VScroll>
      </SheetArea>

      <TabBar>
        <Nav>
          <NavItem $w={8} $ml={25}><Ic w={4} h={8}><path d="M4 0v8L0 4z" fill={GREEN} /></Ic></NavItem>
          <NavItem $w={8} $ml={21}><Tri d="right" /></NavItem>
          <NavItem $w={14} $ml={17}>...</NavItem>
        </Nav>
        <TabSep />
        {TABS.map(([t, w]) => (
          <React.Fragment key={t}>
            <SheetTab $w={w}>{t}</SheetTab>
            <TabSep />
          </React.Fragment>
        ))}
        <SheetTab $w={63}>Juli 24</SheetTab>
        <SheetTab $w={78} $active>Agust 24</SheetTab>
        <AddArea><PlusCircle /></AddArea>
        <TabDots><ThreeDots /></TabDots>
        <HScroll>
          <ScrollBtn $h={15} $w={15}><Tri d="left" /></ScrollBtn>
          <HThumb />
          <HTrack />
          <ScrollBtn $h={15} $w={15}><Tri d="right" /></ScrollBtn>
        </HScroll>
      </TabBar>

      <StatusBar>
        READY
        <ViewBtn $w={38} $ml={1033} $active><NormalView /></ViewBtn>
        <ViewBtn $w={38}><PageView /></ViewBtn>
        <ViewBtn $w={38}><BreakView /></ViewBtn>
        <ViewBtn $w={6} $ml={5}><Ic w={6} h={2}><rect width="6" height="2" fill="#fff" /></Ic></ViewBtn>
        <ZoomTrack><ZoomThumb /></ZoomTrack>
        <ViewBtn $w={9} $ml={1}><Ic w={9}><path d="M0 4.500h9M4.500 0v9" stroke="#fff" strokeWidth="2" /></Ic></ViewBtn>
        <ZoomPct>100%</ZoomPct>
      </StatusBar>

      <Taskbar>
        <StartBtn><WinLogo /></StartBtn>
        <TaskItem><TaskIcon><PaintIc /></TaskIcon><TaskLine $w={40} /></TaskItem>
        <TaskItem><TaskIcon><ZoomApp>zm</ZoomApp></TaskIcon><TaskLine $w={40} /></TaskItem>
        <TaskItem><TaskIcon><FishIc /></TaskIcon><TaskLine $w={40} /></TaskItem>
        <TaskItem><TaskIcon><FolderIc /></TaskIcon><TaskLine $w={40} $on /></TaskItem>
        <TaskItem><TaskIcon><ChromeIc /></TaskIcon><TaskLine $w={40} $on /></TaskItem>
        <TaskItem><TaskIcon><PdfIc /></TaskIcon><TaskLine $w={40} $on /></TaskItem>
        <TaskItem $active><TaskIcon><ExcelLogo s={24} /></TaskIcon><TaskLine $w={48} $on /></TaskItem>
        <Tray>
          <ChevTray />
          <TrayIcon><TrayDisp /></TrayIcon>
          <Clock><span>16:58</span><span>15/08/2024</span></Clock>
          <Notice><NoteIc /></Notice>
        </Tray>
      </Taskbar>
    </Screen>
  );
}
